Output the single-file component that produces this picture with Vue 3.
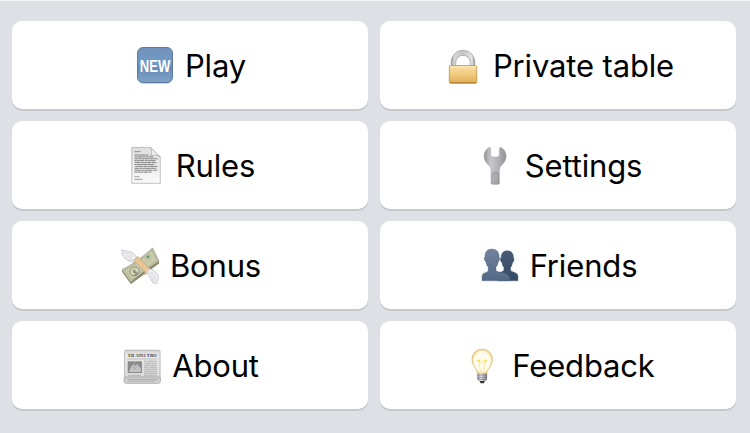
<script setup>
const items = [
  { id: 'play', label: 'Play' },
  { id: 'private', label: 'Private table' },
  { id: 'rules', label: 'Rules' },
  { id: 'settings', label: 'Settings' },
  { id: 'bonus', label: 'Bonus' },
  { id: 'friends', label: 'Friends' },
  { id: 'about', label: 'About' },
  { id: 'feedback', label: 'Feedback' },
]
const newsLines = [18.2, 20.2, 22.2, 24.2, 26.2, 28.2, 30.2, 32.2]
const pageLines = [
  { y: 12, w: 14, d: 0 }, { y: 13.9, w: 19, d: 3 }, { y: 15.8, w: 23, d: 7 },
  { y: 17.7, w: 21, d: 1 }, { y: 19.6, w: 22, d: 5 }, { y: 21.5, w: 20, d: 9 },
  { y: 23.4, w: 23, d: 2 }, { y: 25.3, w: 22, d: 6 }, { y: 27.2, w: 23, d: 4 },
  { y: 29.1, w: 17, d: 8 },
]
</script>

<template>
  <main class="menu">
    <button v-for="item in items" :key="item.id" class="card" :class="item.id" type="button">
      <svg class="icon" viewBox="0 0 40 44" aria-hidden="true">
        <g v-if="item.id === 'play'">
          <defs>
            <linearGradient id="blue" x1="0" y1="0" x2="0" y2="1">
              <stop offset="0" stop-color="#7193bd" /><stop offset=".45" stop-color="#7399c3" /><stop offset=".55" stop-color="#648bb6" /><stop offset="1" stop-color="#7fa1c6" />
            </linearGradient>
          </defs>
          <rect x="2.3" y="5.2" width="35.4" height="35.6" rx="6" fill="#c4c4c8" />
          <rect x="2.5" y="4.5" width="35" height="35" rx="5.5" fill="url(#blue)" stroke="#5b7ba3" />
          <g transform="translate(20 29.3) scale(.77 1)">
            <text text-anchor="middle" class="new-text">NEW</text>
          </g>
        </g>
        <g v-else-if="item.id === 'private'">
          <defs>
            <linearGradient id="gold" x1="0" y1="0" x2="0" y2="1">
              <stop offset="0" stop-color="#f7dda3" /><stop offset=".5" stop-color="#f1cb80" /><stop offset="1" stop-color="#e0ad56" />
            </linearGradient>
            <linearGradient id="steel" x1="0" y1="0" x2="1" y2="0">
              <stop offset="0" stop-color="#929292" /><stop offset=".12" stop-color="#d8d8d8" /><stop offset=".5" stop-color="#c4c4c4" /><stop offset=".88" stop-color="#e3e3e3" /><stop offset="1" stop-color="#8d8d8d" />
            </linearGradient>
          </defs>
          <path d="M8.2 24V19a11.8 11.8 0 0 1 23.6 0v5h-4.6v-4.5a7.2 7.2 0 0 0-14.4 0V24z" fill="url(#steel)" stroke="#9c9c9c" stroke-width=".7" />
          <rect x="6.3" y="22.6" width="27.4" height="17.6" rx="1.2" fill="url(#gold)" stroke="#c18e3c" stroke-width=".8" />
          <path d="M7 24h26" stroke="#fff0bb" stroke-width="1" />
          <path d="M7 39.8h26" stroke="#a5722e" stroke-width=".8" />
        </g>
        <g v-else-if="item.id === 'rules'">
          <defs>
            <linearGradient id="paper" x1="0" y1="0" x2="0" y2="1">
              <stop offset="0" stop-color="#dedede" /><stop offset="1" stop-color="#fafafa" />
            </linearGradient>
          </defs>
          <path d="M5.8 4.4h18.7L34.3 14v26.3H5.8z" fill="url(#paper)" stroke="#a9a9a9" stroke-width=".7" />
          <path d="M8.5 8.7h6" stroke="#777" stroke-width=".8" />
          <path v-for="line in pageLines" :key="line.y" :d="`M8.5 ${line.y}h${line.w}`" :stroke-dashoffset="line.d" stroke="#7d7d7d" stroke-width="1" stroke-dasharray="3 .4 2 .3 5 .5" />
          <path d="M24.5 4.4c1.6 3.2 1.1 6.2.3 8.2 2.7-.8 6.2-.8 9.5 1.4z" fill="#ededed" stroke="#a0a0a0" stroke-width=".6" />
          <path d="M8.5 33.8h5M8.5 36.4h8" stroke="#888" stroke-width=".8" />
        </g>
        <g v-else-if="item.id === 'settings'">
          <defs>
            <linearGradient id="wrench" x1="0" y1="0" x2="1" y2="0">
              <stop offset="0" stop-color="#929295" /><stop offset=".3" stop-color="#c9c9cd" /><stop offset=".65" stop-color="#b1b1b5" /><stop offset="1" stop-color="#929296" />
            </linearGradient>
          </defs>
          <path d="M14.5 4.3C10.7 6.4 9.1 9.3 9.1 13.2c0 4.1 2 6.5 4.4 8.7 2.2 2 2.6 3.2 2.6 5.1v14h8.2V27c0-2 .6-3.3 2.4-5.1 2.4-2.3 4.4-4.7 4.4-8.7 0-3.9-1.8-6.9-5.5-8.9-.8.2-1 .8-1.1 1.7v5.5c0 1.7-1.8 2.8-4.5 2.8s-4.4-1.1-4.4-2.8V6c0-.9-.3-1.5-1.1-1.7z" fill="url(#wrench)" stroke="#929298" stroke-width=".5" />
          <path d="M17.1 41V32.8c0-2.2 1.5-3.5 3.2-3.5s3.1 1.3 3.1 3.5V41z" fill="#a9a9ad" stroke="#86868a" stroke-width=".7" />
          <path d="M18.1 41v-7.8c0-1.5 1-2.5 2-2.5" fill="none" stroke="#c4c4c8" stroke-width=".8" />
        </g>
        <g v-else-if="item.id === 'bonus'">
          <path d="M14.8 19.4c-1.5.6-2.5.2-3.2-.8-1.7.3-2.5-.3-2.7-1.3-1.8.2-2.6-.5-2.7-1.7-1.7 0-2.5-.8-2.3-2.1C2.2 12.5 2.2 9 1.5 6.8c3.7 1.7 8.5 1.1 11.2 3 2.1 1.5 3.9 3.8 4.5 6.7z" fill="#efeff1" stroke="#b5b5b9" stroke-width=".7" />
          <path d="M4 9.6c3.2 1 6.5.7 8.6 3.7M5.7 13c3.1-.1 5 .7 6.5 2.4M8.7 16.7l4 .2" fill="none" stroke="#c9c9cd" stroke-width=".7" />
          <path d="M2 26.8l.2 2.3 8.7 12L39 20.5v-2.1l-1-.8L10.4 38z" fill="#77775b" />
          <path d="M2 26.5C13 22 23.4 13.2 32.5 5L39 18.2C30 24 20 31.7 10.7 39.2z" fill="#c9c9ac" stroke="#85876a" stroke-width=".6" />
          <path d="M4.5 27C14 23 23.5 15 32 7.3l5.2 10.2C28.5 23.4 19.7 30 11.2 36.8z" fill="none" stroke="#a3a78b" stroke-width=".7" />
          <path d="M3 28.6l8.2 11.2 27.6-20.2" fill="none" stroke="#aaa983" stroke-width=".7" />
          <circle cx="28" cy="13.8" r="3.3" fill="#b8c4a6" />
          <circle cx="28" cy="13.8" r="1.3" fill="#5d966a" />
          <ellipse cx="14.5" cy="28.3" rx="4.8" ry="4.1" transform="rotate(-30 14.5 28.3)" fill="#dad9bd" stroke="#85886c" stroke-width=".8" />
          <text x="14.5" y="31.9" text-anchor="middle" transform="rotate(-24 14.5 28.3)" class="dollar">$</text>
          <path d="M13.4 17.5l4.5-4 10.9 11.7-.4 4.2-3.7 2.4.2-3.2z" fill="#e9c595" stroke="#c59a6a" stroke-width=".6" />
          <path d="M24.8 28.5l3.9-3.1" stroke="#ffe0ae" stroke-width=".7" />
          <path d="M29.2 25.8c3.2.3 6.5 2.6 8.3 5.8 1.6 3 .4 6.8-1.5 9.4-.9-1.2-2-1.3-3.2-1.1.1-1.6-.5-2.3-1.8-2.5.3-1.4-.3-2.1-1.3-2.6.2-1.4-.3-2.3-1.3-2.8.3-1.4-.5-2.3-1.9-2.7z" fill="#eeeef1" stroke="#b6b6bb" stroke-width=".7" />
          <path d="M30 29.8c3.4.6 5.5 3.8 5.4 8.3M30.7 33c1.6.7 2.7 2.5 2.6 4.6" fill="none" stroke="#c9c9ce" stroke-width=".7" />
        </g>
        <g v-else-if="item.id === 'friends'">
          <defs>
            <linearGradient id="friendA" x1="0" y1="0" x2="0" y2="1">
              <stop offset="0" stop-color="#71829c" /><stop offset="1" stop-color="#526985" />
            </linearGradient>
            <linearGradient id="friendB" x1="0" y1="0" x2="0" y2="1">
              <stop offset="0" stop-color="#485a74" /><stop offset="1" stop-color="#364b66" />
            </linearGradient>
          </defs>
          <path d="M27.2 7.8c-4.2 0-6.2 2.7-6 7-.9.2-.9 1.7-.5 3 .3 1.1.7 1.5 1.2 1.6.4 2.4 1 3.8 2 4.8v3.3c-1 1.2-4 1.8-6 2.5v7.8h20v-4.5c0-2.4-1.5-3.3-4-4.1-1.6-.5-2.7-1-3.3-2v-3c1-1 1.6-2.4 1.9-4.8 1.6-.3 1.9-3.6.9-4.6.2-4.2-2-7-6.2-7z" fill="url(#friendB)" stroke="#364b66" stroke-width=".4" />
          <path d="M11.8 6.1c-4.8 0-7 3.1-6.7 7.7-1 .2-1 1.8-.5 3.4.4 1 .8 1.4 1.3 1.5.3 2.5 1.1 4.2 2.3 5.2v4.2c-.7.9-2 1.3-3.2 1.7-2.2.8-3 2.1-3 4v4h27.6v-2.4c0-3-2.4-4.2-5.4-5.2-3.1-1-7.2-1.2-8.2-2.6v-3.7c1.3-1.1 2-2.7 2.3-5.2 1.5-.5 1.8-4 .8-4.9.3-4.6-2.5-7.7-7.3-7.7z" fill="url(#friendA)" stroke="#526985" stroke-width=".4" />
        </g>
        <g v-else-if="item.id === 'about'">
          <defs>
            <linearGradient id="news" x1="0" y1="0" x2="0" y2="1">
              <stop offset="0" stop-color="#d0d0d0" /><stop offset=".15" stop-color="#e9e9e9" /><stop offset=".76" stop-color="#dcdcdc" /><stop offset=".82" stop-color="#c5c5c5" /><stop offset="1" stop-color="#d5d5d5" />
            </linearGradient>
          </defs>
          <path d="M4 7.2h32.6q1.5 0 1.5 1.5v23l.5 6q0 2.7-2.4 2.7H4.5q-2.8 0-2.6-2.7l.6-6v-23q0-1.5 1.5-1.5z" fill="url(#news)" stroke="#a5a5a5" stroke-width=".7" />
          <path d="M2.2 35.2q1-1.5 3-1.5h30.5q2 0 2.5 1.5" fill="none" stroke="#a5a5a5" stroke-width=".5" />
          <text x="20.3" y="14.2" text-anchor="middle" textLength="29" lengthAdjust="spacingAndGlyphs" class="masthead">The Apple Times</text>
          <path d="M5 16h30.5" stroke="#aaa" stroke-width=".6" />
          <rect x="5.7" y="18.3" width="14.2" height="11.7" fill="#898989" />
          <path d="M6.8 29l2.2-5 3-3 1 2 2-2 3.7 4 .2 4z" fill="#c4c4c4" />
          <path d="M12.6 19v8m-4-5l4 4 4-4" fill="none" stroke="#aaa" stroke-width=".9" />
          <path v-for="y in newsLines" :key="y" :d="`M22 ${y}h13`" stroke="#a0a0a0" stroke-width=".8" :stroke-dashoffset="y" stroke-dasharray="2 .4 4 .5" />
          <path d="M6 32.4h13M6 36.5h29M6 38.3h27" stroke="#ababab" stroke-width=".8" />
        </g>
        <g v-else>
          <defs>
            <radialGradient id="bulb">
              <stop offset="0" stop-color="#fffbd9" /><stop offset=".6" stop-color="#fffdf6" /><stop offset=".82" stop-color="#fff7db" /><stop offset="1" stop-color="#f2d791" />
            </radialGradient>
            <linearGradient id="screw" x1="0" y1="0" x2="1" y2="0">
              <stop offset="0" stop-color="#85858a" /><stop offset=".35" stop-color="#e4e4e8" /><stop offset=".65" stop-color="#b5b5bb" /><stop offset="1" stop-color="#75757c" />
            </linearGradient>
          </defs>
          <path d="M15.7 30.6c-.4-4.5-5.6-7.3-5.6-14.1 0-6.4 4.4-10.2 10.1-10.2s10.1 3.8 10.1 10.2c0 6.8-5.3 9.7-5.6 14.1z" fill="url(#bulb)" stroke="#d6b66f" stroke-width=".8" />
          <path d="M18.7 29.5l-2.1-11.7 2.1 1.5 1.4-1.4 1.5 1.4 2.1-1.5-2.1 11.7" fill="none" stroke="#f8e6a6" stroke-width=".9" />
          <circle cx="16.8" cy="17.8" r="1.4" fill="#ffe04d" /><circle cx="23.5" cy="17.8" r="1.4" fill="#ffe04d" />
          <path d="M15.3 30.5h9.8v6.1l-2.6 2.2H18l-2.7-2.2z" fill="url(#screw)" />
          <path d="M15.4 32.4l9.6-.5M15.4 34.7l9.6-.5M16 36.8l8.4-.5" stroke="#77777e" stroke-width=".6" />
          <path d="M17.6 38h5.2l-1 2.2h-3.2z" fill="#333338" />
        </g>
      </svg>
      <span class="label">{{ item.label }}</span>
    </button>
  </main>
</template>

<style>
body { background: #dde1e6; }
</style>

<style scoped>
.menu {
  box-sizing: border-box;
  width: 750px;
  height: 433px;
  padding: 20px 14px 24px 12px;
  border-top: 1px solid #f3f4f6;
  display: grid;
  grid-template-columns: repeat(2, 356px);
  grid-template-rows: repeat(4, 88px);
  gap: 12px;
  background: #dde1e6;
  font-family: Inter, "Liberation Sans", sans-serif;
}
.card {
  display: flex;
  align-items: center;
  justify-content: center;
  gap: 10px;
  min-width: 0;
  padding: 0 0 0 1px;
  border: 0;
  border-radius: 10px;
  background: #fff;
  box-shadow: 0 2px 0 #c5c8cc;
  color: #000;
  font: 400 31px/40px Inter, "Liberation Sans", sans-serif;
  letter-spacing: -.15px;
}
.icon { flex: none; width: 40px; height: 44px; letter-spacing: 0; }
.label { padding-top: 2px; white-space: nowrap; }
.new-text { font: 700 17px "Liberation Sans", sans-serif; fill: #fff; }
.dollar { font: 700 8px "Liberation Serif", serif; fill: #74775d; }
.masthead { font: 700 4.7px "Liberation Serif", serif; font-variant-caps: small-caps; fill: #333; }
</style>
